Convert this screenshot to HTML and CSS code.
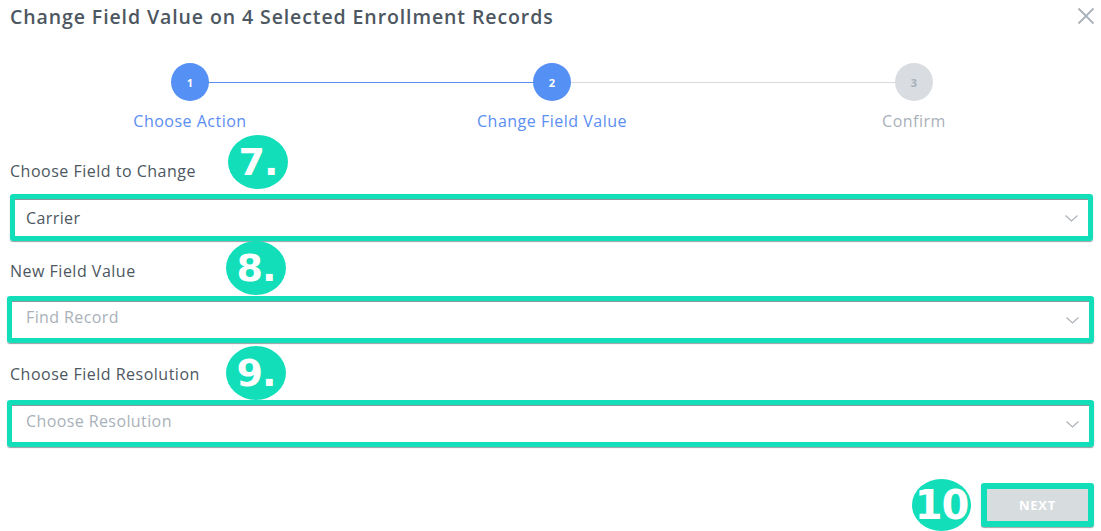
FILE: index.html
```html
<!DOCTYPE html>
<html lang="en">
<head>
<meta charset="utf-8">
<title>Change Field Value</title>
<link rel="stylesheet" href="styles.css">
</head>
<body>
<div class="modal">
  <header class="head">
    <h1 class="title">Change Field Value on 4 Selected Enrollment Records</h1>
    <button class="close" aria-label="Close">
      <svg width="18" height="18" viewBox="0 0 18 18"><path d="M1.5 1.5 L16.5 16.5 M16.5 1.5 L1.5 16.5" stroke="#a9b1b9" stroke-width="1.8" fill="none"/></svg>
    </button>
  </header>

  <ol class="stepper">
    <li class="step done"><span class="dot">1</span><span class="step-label">Choose Action</span></li>
    <li class="step active"><span class="dot">2</span><span class="step-label">Change Field Value</span></li>
    <li class="step todo"><span class="dot">3</span><span class="step-label">Confirm</span></li>
  </ol>

  <div class="field field-1">
    <label class="label">Choose Field to Change</label>
    <div class="select select-wide">
      <span class="value">Carrier</span>
      <svg class="chev" width="13" height="7" viewBox="0 0 13 7"><path d="M0.5 0.5 L6.5 6 L12.5 0.5" stroke="#a9b1b9" stroke-width="1.1" fill="none"/></svg>
    </div>
    <span class="badge b7">7.</span>
  </div>

  <div class="field field-2">
    <label class="label">New Field Value</label>
    <div class="select">
      <span class="value placeholder">Find Record</span>
      <svg class="chev" width="13" height="7" viewBox="0 0 13 7"><path d="M0.5 0.5 L6.5 6 L12.5 0.5" stroke="#a9b1b9" stroke-width="1.1" fill="none"/></svg>
    </div>
    <span class="badge b8">8.</span>
  </div>

  <div class="field field-3">
    <label class="label">Choose Field Resolution</label>
    <div class="select">
      <span class="value placeholder">Choose Resolution</span>
      <svg class="chev" width="13" height="7" viewBox="0 0 13 7"><path d="M0.5 0.5 L6.5 6 L12.5 0.5" stroke="#a9b1b9" stroke-width="1.1" fill="none"/></svg>
    </div>
    <span class="badge b9">9.</span>
  </div>

  <div class="actions">
    <span class="badge b10">10</span>
    <button class="next">NEXT</button>
  </div>
</div>
</body>
</html>
```

FILE: styles.css
```css
* { box-sizing: border-box; }
html, body { margin: 0; padding: 0; background: #fff; }
body {
  font-family: "Open Sans", "Liberation Sans", sans-serif;
  color: #4d5761;
  width: 1101px;
  height: 531px;
  overflow: hidden;
}
.modal {
  display: flex;
  flex-direction: column;
  padding: 0 7px 0 7px;
}
.head {
  display: flex;
  justify-content: space-between;
  align-items: flex-start;
  padding: 5px 0 0 3px;
}
.title {
  margin: 0;
  font-size: 19.5px;
  line-height: 24px;
  font-weight: 600;
  color: #4d5761;
  letter-spacing: 0.9px;
}
.close {
  border: 0;
  background: none;
  padding: 0;
  margin: 2px -1px 0 0;
  width: 18px;
  height: 18px;
  cursor: pointer;
}
.stepper {
  list-style: none;
  margin: 34px 0 0 2px;
  padding: 0;
  display: grid;
  grid-template-columns: repeat(3, 362px);
}
.step {
  position: relative;
  display: flex;
  flex-direction: column;
  align-items: center;
}
.step::after {
  content: "";
  position: absolute;
  top: 19px;
  left: 50%;
  width: 100%;
  height: 1px;
  background: #d6dadf;
  z-index: 0;
}
.step.done::after { background: #5a8ff2; }
.step.todo::after { display: none; }
.dot {
  position: relative;
  z-index: 1;
  width: 38px;
  height: 38px;
  border-radius: 50%;
  display: flex;
  align-items: center;
  justify-content: center;
  font-size: 11px;
  font-weight: 700;
  color: #fff;
  background: #5590f5;
}
.todo .dot { background: #d9dde1; color: #a7afb7; }
.step-label {
  margin-top: 10px;
  font-size: 16px;
  line-height: 20px;
  letter-spacing: 0.5px;
  color: #5b8ef2;
}
.todo .step-label { color: #a9b1b9; }

.field {
  position: relative;
  display: flex;
  flex-direction: column;
}
.field-1 { margin-top: 30px; }
.field-2 { margin-top: 20px; }
.field-3 { margin-top: 21px; }
.label {
  font-size: 16px;
  line-height: 20px;
  letter-spacing: 0.5px;
  padding-left: 3px;
  color: #4d5761;
}
.field-1 .label { margin-bottom: 13px; }
.field-2 .label { margin-bottom: 15px; }
.field-3 .label { margin-bottom: 16px; }
.select {
  height: 47px;
  border: 5px solid #12deba;
  border-radius: 3px;
  display: flex;
  align-items: center;
  justify-content: space-between;
  padding: 0 10px 0 14px;
  box-shadow: inset 0 1px 0 #8d949b, 0 1px 1px rgba(70, 80, 90, 0.55);
  width: 1087px;
}
.select-wide {
  margin-left: 3px;
  width: 1083px;
  padding-left: 11px;
}
.value {
  font-size: 16px;
  letter-spacing: 0.4px;
  color: #4d5761;
}
.value.placeholder { color: #a9b1b9; margin-bottom: 5px; }
.chev { margin-top: 2px; }

.badge {
  display: flex;
  align-items: center;
  justify-content: center;
  width: 60px;
  height: 54px;
  border-radius: 50%;
  background: #12deba;
  color: #fff;
  font-family: "DejaVu Sans", "Verdana", sans-serif;
  font-weight: 700;
  font-size: 38px;
  letter-spacing: -1px;
}
.b7, .b8, .b9 { position: absolute; }
.b7 { left: 221px; top: -26px; }
.b8 { left: 219px; top: -20px; }
.b9 { left: 219px; top: -18px; }
.b10 {
  width: 59px;
  height: 52px;
  font-size: 40px;
}
.actions {
  display: flex;
  justify-content: flex-end;
  align-items: center;
  gap: 10px;
  margin-top: 32px;
}
.next {
  width: 113px;
  height: 44px;
  border: 6px solid #12deba;
  border-radius: 3px;
  background: #d7dcdf;
  color: #fff;
  font-family: "Open Sans", "Liberation Sans", sans-serif;
  font-weight: 700;
  font-size: 13px;
  letter-spacing: 0.8px;
  box-shadow: 0 1px 1px rgba(70, 80, 90, 0.5);
  padding: 0;
}
```
